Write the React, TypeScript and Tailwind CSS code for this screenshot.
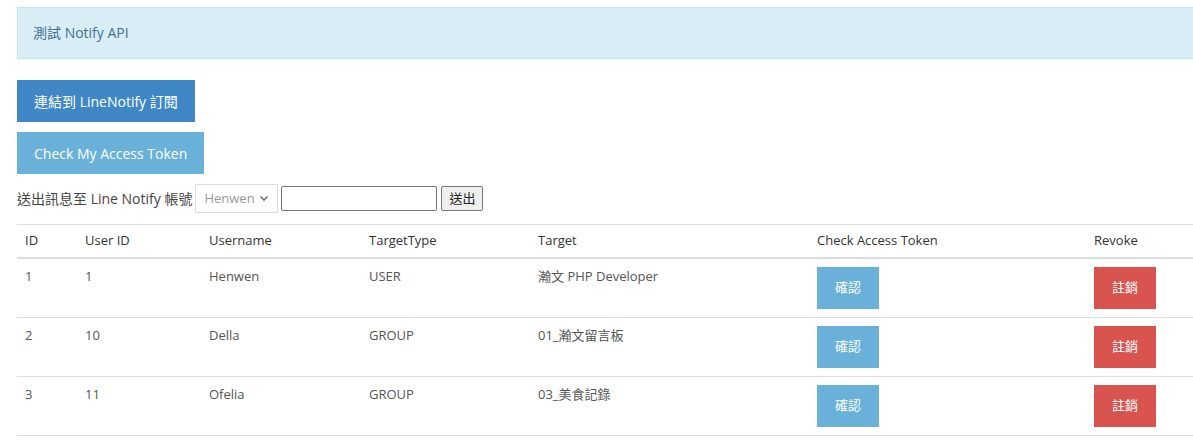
import * as React from "react";

const rows = [
  { id: 1, userId: 1, username: "Henwen", type: "USER", target: "瀚文 PHP Developer" },
  { id: 2, userId: 10, username: "Della", type: "GROUP", target: "01_瀚文留言板" },
  { id: 3, userId: 11, username: "Ofelia", type: "GROUP", target: "03_美食記錄" },
];

const FONT = "[font-family:'Open_Sans','Noto_Sans_CJK_TC',sans-serif]";

export default function App() {
  return (
    <div className={`w-full overflow-hidden bg-white text-[#555] ${FONT}`}>
      <div className="ml-[17px] w-[1200px] pt-[7px]">
        <div className="border border-[#bce8f1] bg-[#d9edf7] px-[15px] py-[15px] text-[14px] leading-5 text-[#40728f]">
          測試 Notify API
        </div>

        <div className="mt-[21px] flex flex-col items-start gap-[10px]">
          <button className="h-[42px] bg-[#3f88c5] px-[17px] text-[14px] text-white">
            連結到 LineNotify 訂閱
          </button>
          <button className="h-[42px] bg-[#69b1d9] px-[17px] text-[14px] text-white">
            Check My Access Token
          </button>
        </div>

        <div className="mt-[10px] flex items-center text-[14px] text-[#444]">
          <span className="mr-[3px]">送出訊息至 Line Notify 帳號</span>
          <div className="flex h-[29px] w-[83px] items-center justify-between border border-[#ddd] bg-white pl-2 pr-2 text-[13px] text-[#999]">
            <span>Henwen</span>
            <svg width="10" height="7" viewBox="0 0 10 7" fill="none">
              <path d="M1.5 1.5L5 5L8.5 1.5" stroke="#777" strokeWidth="1.6" />
            </svg>
          </div>
          <input className="ml-[3px] h-[25px] w-[156px] rounded-[2px] border border-[#767676] bg-white" />
          <button className="ml-1 h-[25px] w-[42px] rounded-[2px] border border-[#767676] bg-[#efefef] text-[13px] text-[#222]">
            送出
          </button>
        </div>

        <table className="mt-[11px] w-[1200px] table-fixed border-collapse text-[13px]">
          <colgroup>
            <col className="w-[60px]" />
            <col className="w-[124px]" />
            <col className="w-[160px]" />
            <col className="w-[169px]" />
            <col className="w-[279px]" />
            <col className="w-[277px]" />
            <col />
          </colgroup>
          <thead>
            <tr className="border-t border-b-2 border-t-[#ddd] border-b-[#ddd] text-left text-[#333]">
              {["ID", "User ID", "Username", "TargetType", "Target", "Check Access Token", "Revoke"].map((h) => (
                <th key={h} className="h-[33px] px-2 py-[6px] align-middle font-medium">
                  {h}
                </th>
              ))}
            </tr>
          </thead>
          <tbody>
            {rows.map((r) => (
              <tr key={r.id} className="border-b border-[#ddd] align-top">
                <td className="px-2 pt-2">{r.id}</td>
                <td className="px-2 pt-2">{r.userId}</td>
                <td className="px-2 pt-2">{r.username}</td>
                <td className="px-2 pt-2">{r.type}</td>
                <td className="px-2 pt-2">{r.target}</td>
                <td className="px-2 pt-2 pb-2">
                  <button className="h-[42px] w-[62px] bg-[#69b1d9] text-[13px] text-white">確認</button>
                </td>
                <td className="px-2 pt-2 pb-2">
                  <button className="h-[42px] w-[62px] bg-[#d9534f] text-[13px] text-white">註銷</button>
                </td>
              </tr>
            ))}
          </tbody>
        </table>
      </div>
    </div>
  );
}
